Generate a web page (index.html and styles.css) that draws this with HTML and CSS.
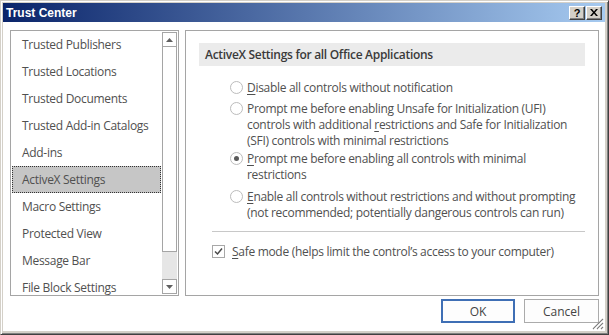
FILE: index.html
```html
<!DOCTYPE html>
<html>
<head>
<meta charset="UTF-8">
<title>Trust Center</title>
<link rel="stylesheet" href="styles.css">
</head>
<body>
<div class="window">

  <div class="caption">
    <span class="caption-title">Trust Center</span>
    <div class="caption-btns">
      <span class="cbtn cbtn-help">?</span>
      <span class="cbtn">
        <svg width="8" height="7" viewBox="0 0 8 7"><path d="M0 0h2l2 2.5L6 0h2L5 3.5 8 7H6L4 4.5 2 7H0l3-3.5z" fill="#000"/></svg>
      </span>
    </div>
  </div>

  <div class="client">
    <div class="main">

      <!-- category list -->
      <div class="nav">
        <ul class="nav-list">
          <li>Trusted Publishers</li>
          <li>Trusted Locations</li>
          <li>Trusted Documents</li>
          <li>Trusted Add-in Catalogs</li>
          <li>Add-ins</li>
          <li class="selected">ActiveX Settings</li>
          <li>Macro Settings</li>
          <li>Protected View</li>
          <li>Message Bar</li>
          <li>File Block Settings</li>
        </ul>
        <div class="scrollbar">
          <div class="sb-btn"><svg width="7" height="4" viewBox="0 0 7 4"><path d="M0 4L3.5 0 7 4z" fill="#606060"/></svg></div>
          <div class="sb-thumb"></div>
          <div class="sb-track"></div>
          <div class="sb-btn"><svg width="7" height="4" viewBox="0 0 7 4"><path d="M0 0h7L3.5 4z" fill="#606060"/></svg></div>
        </div>
      </div>

      <!-- settings -->
      <div class="panel">
        <div class="section-head">ActiveX Settings for all Office Applications</div>

        <div class="options">
          <div class="opt opt-first">
            <span class="radio"></span>
            <span class="opt-text"><u>D</u>isable all controls without notification</span>
          </div>
          <div class="opt opt-ufi">
            <span class="radio"></span>
            <span class="opt-text">Prompt me before enabling Unsafe for Initialization (UFI)<br>controls with additional <u>r</u>estrictions and Safe for Initialization<br>(SFI) controls with minimal restrictions</span>
          </div>
          <div class="opt opt-minimal">
            <span class="radio checked"></span>
            <span class="opt-text"><u>P</u>rompt me before enabling all controls with minimal<br>restrictions</span>
          </div>
          <div class="opt">
            <span class="radio"></span>
            <span class="opt-text"><u>E</u>nable all controls without restrictions and without prompting<br>(not recommended; potentially dangerous controls can run)</span>
          </div>
        </div>

        <div class="sep"></div>

        <div class="check-row">
          <span class="checkbox">
            <svg width="11" height="11" viewBox="0 0 11 11"><path d="M2 5.5l2.5 2.5L9 2.5" fill="none" stroke="#4a4a4a" stroke-width="1.5"/></svg>
          </span>
          <span><u>S</u>afe mode (helps limit the control’s access to your computer)</span>
        </div>
      </div>

    </div>

    <div class="footer">
      <button class="btn btn-default">OK</button>
      <button class="btn">Cancel</button>
    </div>
  </div>

  <!-- size grip -->
  <svg class="grip" width="12" height="12" viewBox="0 0 12 12">
    <path d="M11 1L1 11M11 5L5 11M11 9L9 11" stroke="#808080" stroke-width="1.2"/>
    <path d="M11 2.5L2.5 11M11 6.5L6.5 11M11 10.5L10.5 11" stroke="#ffffff" stroke-width="1"/>
  </svg>
</div>
</body>
</html>
```

FILE: styles.css
```css
html, body {
  margin: 0;
  padding: 0;
  overflow: hidden;
  background: #d4d0c8;
}

/* Outer window frame (classic 3D) */
.window {
  position: relative;
  width: 609px;
  height: 335px;
  box-sizing: border-box;
  border: 1px solid;
  border-color: #d4d0c8 #404040 #404040 #d4d0c8;
  box-shadow: inset 1px 1px #ffffff, inset -1px -1px #808080;
  padding: 2px 3px 3px 2px;
  background: #d4d0c8;
  display: flex;
  flex-direction: column;
  font-family: "Open Sans", "Noto Sans", sans-serif;
  font-size: 12px;
  letter-spacing: -0.3px;
  color: #505050;
}

/* Title bar */
.caption {
  height: 19px;
  flex: none;
  display: flex;
  align-items: center;
  justify-content: space-between;
  padding: 0 3px 0 3px;
  background: linear-gradient(to right, #0a246a, #a6caf0);
}

.caption-title {
  font-family: "Liberation Sans", Arial, sans-serif;
  font-weight: bold;
  font-size: 12px;
  letter-spacing: 0;
  color: #fff;
}

.caption-btns {
  display: flex;
  gap: 1px;
}

.cbtn {
  width: 16px;
  height: 14px;
  box-sizing: border-box;
  display: flex;
  align-items: center;
  justify-content: center;
  background: #d4d0c8;
  border: 1px solid;
  border-color: #ffffff #404040 #404040 #ffffff;
  box-shadow: inset -1px -1px #808080;
}

.cbtn-help {
  font-family: "Liberation Sans", Arial, sans-serif;
  font-weight: bold;
  font-size: 11px;
  letter-spacing: 0;
  color: #000;
  line-height: 12px;
}

/* Dialog client area */
.client {
  flex: 1;
  background: #fff;
  padding: 8px 6px 8px 7px;
  display: flex;
  flex-direction: column;
}

.main {
  height: 266px;
  display: flex;
  gap: 6px;
}

/* Left category list */
.nav {
  width: 169px;
  box-sizing: border-box;
  border: 1px solid #a5a5a5;
  display: flex;
  overflow: hidden;
}

.nav-list {
  list-style: none;
  margin: 0;
  padding: 0;
  width: 151px;
  flex: none;
}

.nav-list li {
  height: 27px;
  line-height: 27px;
  padding-left: 11px;
  white-space: nowrap;
}

.nav-list li.selected {
  margin: 0 1px;
  padding-left: 9px;
  line-height: 25px;
  box-sizing: border-box;
  background: #c6c6c6;
  border: 1px dotted #333;
}

.scrollbar {
  width: 15px;
  flex: none;
  margin: 1px 0 1px 0;
  display: flex;
  flex-direction: column;
}

.sb-btn {
  height: 15px;
  box-sizing: border-box;
  border: 1px solid #a5a5a5;
  display: flex;
  align-items: center;
  justify-content: center;
  background: #fff;
}

.sb-thumb {
  height: 205px;
  box-sizing: border-box;
  border: 1px solid #a5a5a5;
  border-top: none;
  background: #fff;
}

.sb-track {
  flex: 1;
  background: #e6e6e6;
}

/* Right settings panel */
.panel {
  flex: 1;
  box-sizing: border-box;
  border: 1px solid #a5a5a5;
}

.section-head {
  margin: 12px 13px 0 13px;
  height: 23px;
  line-height: 23px;
  padding-left: 6px;
  background: #ebebeb;
  font-weight: 600;
  color: #3a3a3a;
  white-space: nowrap;
}

.options {
  margin-top: 14px;
  padding-left: 44px;
  display: flex;
  flex-direction: column;
  gap: 6px;
}

.opt-first {
  margin-bottom: -1px;
}

.opt-ufi {
  margin-bottom: -4px;
}

.opt {
  display: flex;
  align-items: flex-start;
  gap: 4px;
  line-height: 16px;
  white-space: nowrap;
}

.radio {
  flex: none;
  width: 13px;
  height: 13px;
  margin-top: 1px;
  box-sizing: border-box;
  border: 1px solid #bcbcbc;
  border-radius: 50%;
  background: #fff;
  display: flex;
  align-items: center;
  justify-content: center;
}

.radio.checked::after {
  content: "";
  width: 5px;
  height: 5px;
  border-radius: 50%;
  background: #5a5a5a;
}

.sep {
  margin: 10px 13px 0 26px;
  height: 1px;
  background: #c8c8c8;
}

.check-row {
  margin-top: 12px;
  padding-left: 26px;
  display: flex;
  align-items: flex-start;
  gap: 7px;
  line-height: 16px;
  white-space: nowrap;
}

.checkbox {
  flex: none;
  width: 13px;
  height: 13px;
  margin-top: 1px;
  box-sizing: border-box;
  border: 1px solid #a8a8a8;
  background: #fff;
  display: flex;
  align-items: center;
  justify-content: center;
}

u {
  text-underline-offset: 2px;
}

/* Buttons */
.footer {
  margin-top: 3px;
  display: flex;
  justify-content: flex-end;
  gap: 9px;
}

.btn {
  width: 75px;
  height: 24px;
  box-sizing: border-box;
  border: 1px solid #ababab;
  background: #fdfdfd;
  font-family: inherit;
  font-size: 12px;
  letter-spacing: 0;
  color: #444;
  padding: 0;
}

.btn-default {
  width: 74px;
  border: 2px solid #3f6fb5;
}

.grip {
  position: absolute;
  right: 4px;
  bottom: 4px;
}
```
